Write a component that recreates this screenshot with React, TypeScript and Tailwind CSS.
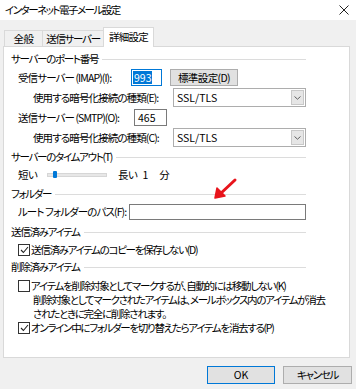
import React from "react";

function GroupHeader({ title, className = "" }: { title: string; className?: string }) {
  return (
    <div className={`flex h-[14px] items-center ${className}`}>
      <span className="whitespace-nowrap">{title}</span>
      <div className="ml-[4px] h-px flex-1 bg-[#dcdcdc]" />
    </div>
  );
}

function Select({ value }: { value: string }) {
  return (
    <div className="flex h-[19px] w-[133px] items-center border border-[#adadad] bg-white">
      <span className="flex-1 pl-[3px] tracking-normal">{value}</span>
      <div className="mr-px flex h-[15px] w-[13px] items-center justify-center border border-[#c8c8c8] bg-[#e6e6e6]">
        <svg width="7" height="4" viewBox="0 0 7 4" fill="none">
          <path d="M0.5 0.5 L3.5 3.2 L6.5 0.5" stroke="#606060" strokeWidth="1" />
        </svg>
      </div>
    </div>
  );
}

function CheckBox({ checked }: { checked: boolean }) {
  return (
    <div className="flex h-[12px] w-[12px] shrink-0 items-center justify-center border border-[#333333] bg-white">
      {checked ? (
        <svg width="9" height="8" viewBox="0 0 9 8" fill="none">
          <path d="M1 4 L3.4 6.5 L8 1" stroke="#222222" strokeWidth="1.1" />
        </svg>
      ) : null}
    </div>
  );
}

function CheckRow({ checked, label, className = "" }: { checked: boolean; label: string; className?: string }) {
  return (
    <div className={`flex h-[13px] items-center pl-[7px] ${className}`}>
      <CheckBox checked={checked} />
      <span className="ml-[1px] whitespace-nowrap">{label}</span>
    </div>
  );
}

export default function App() {
  return (
    <div className="relative h-[389px] w-[356px] overflow-hidden bg-[#f0f0f0] font-['Noto_Sans_CJK_JP',sans-serif] text-[10.5px] leading-[14px] tracking-[-1.3px] text-black [font-feature-settings:'palt']">
      {/* title bar */}
      <div className="flex h-[20px] items-center justify-between bg-white pl-[5px] pr-[6px]">
        <span className="tracking-[-1.5px]">インターネット電子メール設定</span>
        <svg width="10" height="10" viewBox="0 0 10 10" className="mr-[1px]">
          <path d="M0.5 0.5 L9.5 9.5 M9.5 0.5 L0.5 9.5" stroke="#222" strokeWidth="1" />
        </svg>
      </div>

      {/* tabs */}
      <div className="flex h-[26px] items-end pl-[4px]">
        <div className="flex h-[16px] w-[38px] items-center justify-center border-l border-t border-[#d9d9d9] bg-[#f0f0f0] tracking-[-0.5px]">
          全般
        </div>
        <div className="flex h-[16px] w-[61px] items-center justify-center border-l border-t border-[#d9d9d9] bg-[#f0f0f0]">
          送信サーバー
        </div>
        <div className="relative z-10 -mb-px flex h-[20px] w-[51px] items-center justify-center border-x border-t border-[#d9d9d9] bg-white pb-[2px] tracking-[-0.8px]">
          詳細設定
        </div>
      </div>

      {/* panel */}
      <div className="ml-[3px] flex h-[312px] w-[347px] flex-col border border-[#d9d9d9] bg-white pl-[7px] pt-[5px]">
        <div className="flex w-[295px] flex-col">
          <GroupHeader title="サーバーのポート番号" />

          <div className="mt-[3px] flex h-[17px] items-center pl-[7px]">
            <span className="w-[113px] whitespace-nowrap tracking-[-0.9px]">受信サーバー (IMAP)(I):</span>
            <div className="flex h-[17px] w-[31px] items-center border border-[#0078d7] pl-[1px] tracking-normal">
              <span className="bg-[#0078d7] px-px leading-[13px] text-white">993</span>
            </div>
            <div className="ml-[8px] flex h-[17px] w-[68px] items-center justify-center border border-[#adadad] bg-[#e1e1e1] tracking-[-0.6px]">
              標準設定(D)
            </div>
          </div>

          <div className="mt-[2px] flex h-[19px] items-center pl-[22px]">
            <span className="w-[140px] whitespace-nowrap tracking-[-0.9px]">使用する暗号化接続の種類(E):</span>
            <Select value="SSL/TLS" />
          </div>

          <div className="mt-[2px] flex h-[17px] items-center pl-[7px]">
            <span className="w-[116px] whitespace-nowrap tracking-[-0.9px]">送信サーバー (SMTP)(O):</span>
            <div className="flex h-[17px] w-[33px] items-center border border-[#7a7a7a] pl-[3px] tracking-normal">465</div>
          </div>

          <div className="mt-[2px] flex h-[19px] items-center pl-[22px]">
            <span className="w-[140px] whitespace-nowrap tracking-[-0.9px]">使用する暗号化接続の種類(C):</span>
            <Select value="SSL/TLS" />
          </div>

          <GroupHeader title="サーバーのタイムアウト(T)" className="mt-[3px]" />

          <div className="mt-[4px] flex h-[14px] items-center pl-[7px]">
            <span className="w-[29px] tracking-[-0.5px]">短い</span>
            <div className="relative flex h-[14px] w-[60px] items-center">
              <div className="h-[4px] w-full border border-[#d6d6d6] bg-[#e7e7e7]" />
              <div className="absolute left-[6px] top-[3px] h-[7px] w-[4px] rounded-[1px] bg-[#0078d7]" />
            </div>
            <span className="ml-[11px] tracking-[-0.5px]">長い</span>
            <span className="ml-[5px] tracking-normal">1</span>
            <span className="ml-[11px] tracking-normal">分</span>
          </div>

          <GroupHeader title="フォルダー" className="mt-[5px]" />

          <div className="mt-[3px] flex h-[16px] items-center pl-[7px]">
            <span className="w-[111px] whitespace-nowrap tracking-[-0.9px]">ルート フォルダーのパス(F):</span>
            <div className="h-[16px] flex-1 border border-[#7a7a7a]" />
          </div>

          <GroupHeader title="送信済みアイテム" className="mt-[5px]" />
          <CheckRow checked label="送信済みアイテムのコピーを保存しない(D)" className="mt-[4px]" />

          <GroupHeader title="削除済みアイテム" className="mt-[4px]" />
          <CheckRow
            checked={false}
            label="アイテムを削除対象としてマークするが、自動的には移動しない(K)"
            className="mt-[5px]"
          />
          <div className="mt-px whitespace-nowrap pl-[22px] leading-[14px]">
            削除対象としてマークされたアイテムは、メールボックス内のアイテムが消去
            <br />
            されたときに完全に削除されます。
          </div>
          <CheckRow checked label="オンライン中にフォルダーを切り替えたらアイテムを消去する(P)" />
        </div>
      </div>

      {/* red arrow annotation */}
      <svg
        className="absolute left-[212px] top-[177px]"
        width="28"
        height="24"
        viewBox="0 0 28 24"
        fill="none"
      >
        <path d="M23 3 L7 18" stroke="#e8141c" strokeWidth="3" strokeLinecap="round" />
        <path d="M3 21 L5 11 L13 19 Z" fill="#e8141c" stroke="#e8141c" strokeWidth="1.5" strokeLinejoin="round" />
      </svg>

      {/* buttons */}
      <div className="mt-[8px] flex justify-end gap-[8px] pr-[4px]">
        <div className="flex h-[18px] w-[68px] items-center justify-center border border-[#0078d7] bg-[#e1e1e1] tracking-normal">
          OK
        </div>
        <div className="flex h-[18px] w-[69px] items-center justify-center border border-[#adadad] bg-[#e1e1e1]">
          キャンセル
        </div>
      </div>
    </div>
  );
}
